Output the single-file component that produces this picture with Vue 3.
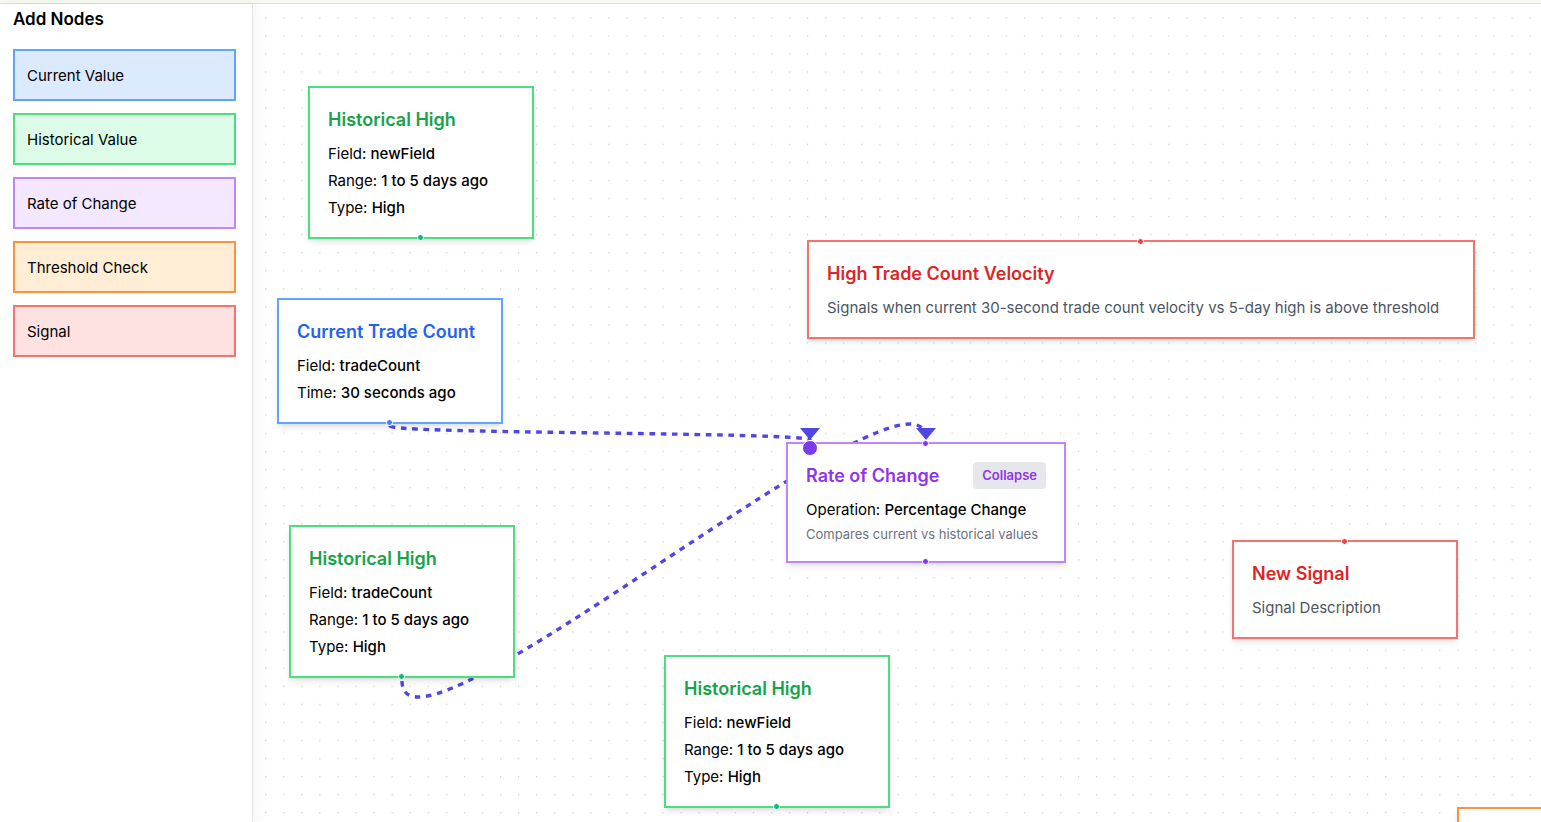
<script setup>
const palette = [
  { label: 'Current Value', tone: 'blue' },
  { label: 'Historical Value', tone: 'green' },
  { label: 'Rate of Change', tone: 'purple' },
  { label: 'Threshold Check', tone: 'orange' },
  { label: 'Signal', tone: 'red' },
]

const history = (field) => [
  ['Field', field],
  ['Range', '1 to 5 days ago'],
  ['Type', 'High'],
]

const nodes = [
  { id: 1, x: 55, y: 82, tone: 'green', title: 'Historical High', rows: history('newField'), handles: ['bottom'] },
  {
    id: 2, x: 24, y: 294, tone: 'blue', title: 'Current Trade Count',
    rows: [['Field', 'tradeCount'], ['Time', '30 seconds ago']], handles: ['bottom'],
  },
  { id: 3, x: 36, y: 521, tone: 'green', title: 'Historical High', rows: history('tradeCount'), handles: ['bottom'] },
  { id: 4, x: 411, y: 651, tone: 'green', title: 'Historical High', rows: history('newField'), handles: ['bottom'] },
  {
    id: 5, x: 533, y: 438, width: 280, tone: 'purple', title: 'Rate of Change', action: 'Collapse',
    rows: [['Operation', 'Percentage Change']], note: 'Compares current vs historical values',
    handles: ['top', 'bottom', 'corner'],
  },
  {
    id: 6, x: 554, y: 236, width: 668, tone: 'red', title: 'High Trade Count Velocity',
    text: 'Signals when current 30-second trade count velocity vs 5-day high is above threshold', handles: ['top'],
  },
  { id: 7, x: 979, y: 536, tone: 'red', title: 'New Signal', text: 'Signal Description', handles: ['top'] },
  { id: 8, x: 1204, y: 803, tone: 'orange', rows: [], handles: [] },
]

const zoom = 1.129
const edges = [
  { from: [137, 422], to: [557, 436], bend: 8 },
  { from: [149, 677], to: [673, 436], bend: 105 },
]
const edgePath = ({ from, to, bend }) => {
  const points = [from, [from[0], from[1] + bend], [to[0], to[1] - bend], to]
  const [a, b, c, d] = points.map((p) => p.map((v) => v / zoom).join(' '))
  return `M${a} C${b} ${c} ${d}`
}
const arrow = ({ to: [x, y] }) => `${x - 10},${y - 12} ${x + 10},${y - 12} ${x},${y}`
</script>

<template>
  <div class="page">
    <header class="topbar"></header>
    <div class="workspace">
      <aside class="sidebar">
        <h2>Add Nodes</h2>
        <div class="palette">
          <button v-for="item in palette" :key="item.label" type="button" class="entry" :class="item.tone" draggable="true">
            {{ item.label }}
          </button>
        </div>
      </aside>

      <main class="canvas">
        <svg class="layer" aria-hidden="true">
          <defs>
            <pattern id="dots" x="4" y="5" width="16" height="16" patternUnits="userSpaceOnUse" patternTransform="scale(1.129)">
              <circle cx="7.3" cy="7.4" r="0.6" fill="#c4c5cc" />
            </pattern>
          </defs>
          <rect width="100%" height="100%" fill="url(#dots)" />
          <g :transform="`scale(${zoom})`" class="wires">
            <path v-for="(edge, i) in edges" :key="i" :d="edgePath(edge)" />
          </g>
          <polygon v-for="(edge, i) in edges" :key="i" :points="arrow(edge)" class="arrow" />
        </svg>

        <article
          v-for="node in nodes"
          :key="node.id"
          class="node"
          :class="node.tone"
          :style="{ left: node.x + 'px', top: node.y + 'px', minWidth: (node.width ?? 226) + 'px' }"
        >
          <div class="head">
            <h3>{{ node.title }}</h3>
            <button v-if="node.action" type="button" class="toggle">{{ node.action }}</button>
          </div>
          <div class="body">
            <p v-for="[name, value] in node.rows" :key="name">{{ name }}: <strong>{{ value }}</strong></p>
            <p v-if="node.note" class="note">{{ node.note }}</p>
            <p v-if="node.text" class="description">{{ node.text }}</p>
          </div>
          <span v-for="side in node.handles" :key="side" class="handle" :class="side"></span>
        </article>
      </main>
    </div>
  </div>
</template>

<style>
body {
  margin: 0;
  background: #fff;
}
</style>

<style scoped>
.page {
  display: flex;
  flex-direction: column;
  height: 100vh;
  overflow: hidden;
  font-family: Inter, "Liberation Sans", sans-serif;
  font-size: 15px;
  color: #000;
}
.page * {
  box-sizing: border-box;
}
.topbar {
  flex: none;
  height: 4px;
  background: #f7faf0;
  border-bottom: 1px solid #dde1d8;
}
.workspace {
  display: flex;
  flex: 1;
  min-height: 0;
}
.sidebar {
  position: relative;
  z-index: 1;
  flex: none;
  width: 253px;
  padding: 0 16px 0 13px;
  background: #fff;
  border-right: 1px solid #e5e7eb;
  box-shadow: 4px 0 12px rgba(0, 0, 0, 0.05);
}
h2 {
  margin: 0 0 15px;
  font-size: 17px;
  line-height: 30px;
  font-weight: 600;
}
.palette {
  display: flex;
  flex-direction: column;
  gap: 12px;
}
.entry {
  height: 52px;
  padding: 0 12px;
  border: 2px solid;
  font: inherit;
  color: #000;
  text-align: left;
  cursor: grab;
}
.entry.blue { background: #dbeafe; }
.entry.green { background: #dcfce7; }
.entry.purple { background: #f3e8ff; }
.entry.orange { background: #ffedd5; }
.entry.red { background: #fee2e2; }
.blue { --title: #2563eb; --handle: #3b82f6; border-color: #60a5fa; }
.green { --title: #16a34a; --handle: #10b981; border-color: #4ade80; }
.purple { --title: #9333ea; --handle: #7c3aed; border-color: #c084fc; }
.orange { --title: #ea580c; --handle: #f97316; border-color: #fb923c; }
.red { --title: #dc2626; --handle: #ef4444; border-color: #f87171; }
.canvas {
  position: relative;
  flex: 1;
  min-width: 0;
  overflow: hidden;
}
.layer {
  position: absolute;
  inset: 0;
  width: 100%;
  height: 100%;
}
.wires {
  fill: none;
  stroke: #4f46e5;
  stroke-width: 3;
  stroke-dasharray: 5 5;
}
.arrow {
  fill: #4f46e5;
}
.node {
  position: absolute;
  padding: 18px;
  border-width: 2px;
  border-style: solid;
  background: #fff;
  box-shadow: 0 4px 7px -1px rgba(0, 0, 0, 0.1), 0 2px 4px -2px rgba(0, 0, 0, 0.1);
  white-space: nowrap;
}
.head {
  display: flex;
  align-items: center;
  justify-content: space-between;
  gap: 16px;
  min-height: 27px;
  margin-bottom: 9px;
}
h3 {
  margin: 0;
  font-size: 18px;
  line-height: 27px;
  font-weight: 600;
  color: var(--title);
}
.toggle {
  height: 27px;
  padding: 0 9px;
  border: 0;
  border-radius: 4px;
  background: #e5e7eb;
  font: 600 13px/27px Inter, "Liberation Sans", sans-serif;
  color: #9333ea;
}
.body {
  display: flex;
  flex-direction: column;
  gap: 4px;
}
p {
  margin: 0;
  line-height: 23px;
}
strong {
  font-weight: 500;
}
.note {
  font-size: 13px;
  line-height: 18px;
  color: #6b7280;
}
.description {
  color: #4b5563;
}
.handle {
  position: absolute;
  left: 50%;
  width: 7px;
  height: 7px;
  margin-left: -4px;
  border: 1px solid #fff;
  border-radius: 50%;
  background: var(--handle);
}
.handle.top { top: -4px; }
.handle.bottom { bottom: -4px; }
.handle.corner {
  top: -4px;
  left: 18px;
  width: 16px;
  height: 16px;
}
</style>
